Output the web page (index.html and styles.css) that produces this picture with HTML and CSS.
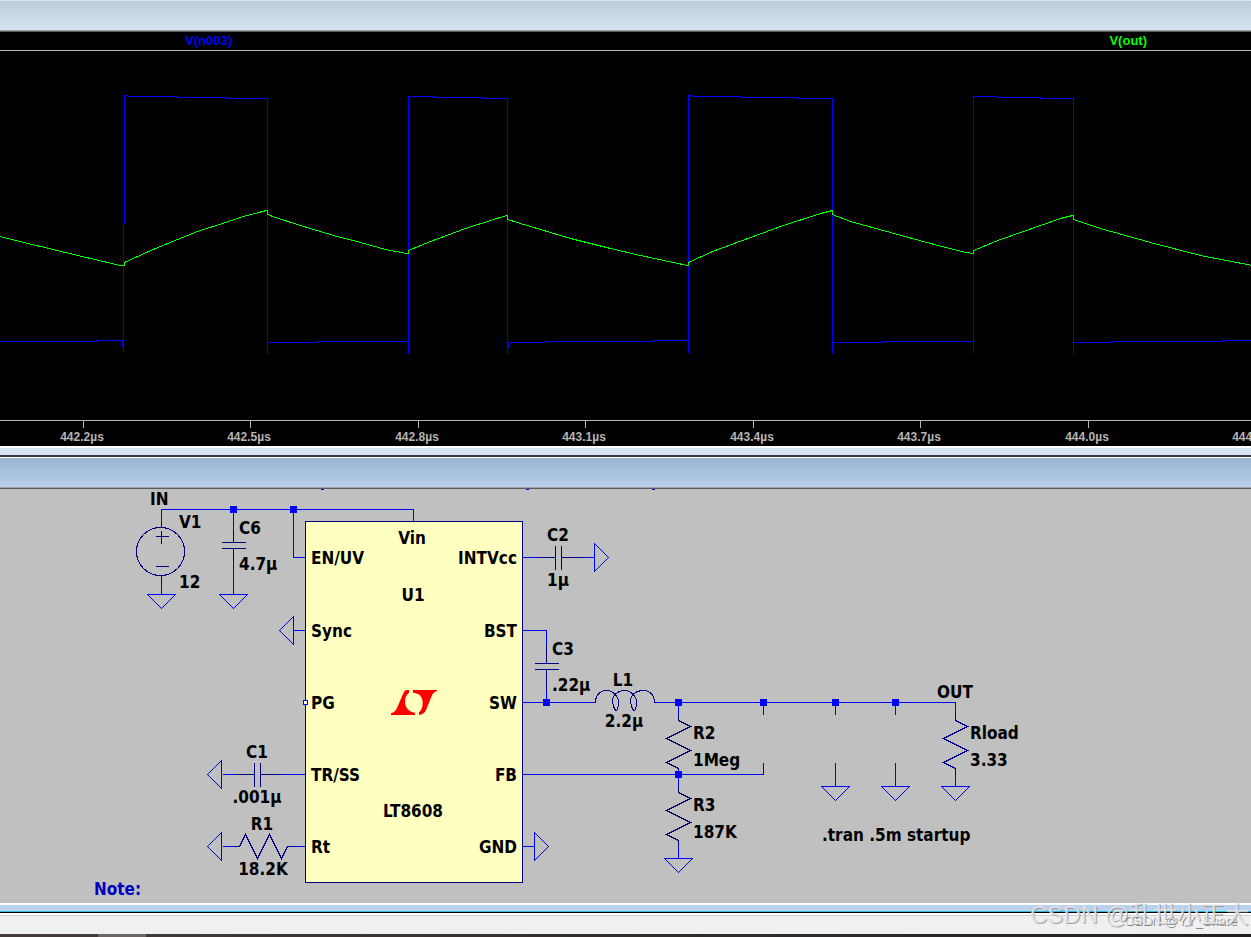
FILE: index.html
```html
<!DOCTYPE html>
<html lang="en">
<head>
<meta charset="utf-8">
<title>Waveform and schematic</title>
<link rel="stylesheet" href="styles.css">
</head>
<body>
<main class="app">
  <section class="pane">
    <header class="titlebar titlebar-inactive"></header>
    <div class="plot">
      <div class="legend">
        <span class="trace-sw">V(n003)</span>
        <span class="trace-out">V(out)</span>
      </div>
      <svg class="waves" role="img" aria-label="V(n003) and V(out) against time">
        <g transform="translate(0.5 -50.5)" fill="none">
          <path class="sw" d="M-1 341H96V340H123V352V223H124V95H127V96H177V97H226V98H267V353V342H317V341H408V353V96H434V97H482V98H507V353V342H545V341H653V340H688V352V95H692V96H740V97H798V98H832V353V342H882V341H973V352V96H997V97H1040V98H1073V353V342H1110V341H1222V340H1252M122 340V346M508 342V347"/>
          <path class="out" d="M-1 236L40 246L90 258L120 265H124V262L148 251L172 241L197 231L222 223L243 216L258 212L266 210H267V214L275 217L300 225L333 235L360 242L385 249L406 253H408V250L430 241L465 228L490 220L506 215H507V219L530 226L570 238L610 248L640 255L687 265H688V262L712 251L750 237L783 225L820 213L832 210V214L850 221L890 232L930 243L965 252L973 253V250L1000 239L1040 225L1060 218L1072 215H1073V219L1100 228L1150 242L1200 255L1252 265"/>
        </g>
      </svg>
      <svg class="axis" role="img" aria-label="Time axis">
        <path class="tick" d="M83.500 0V7M250.500 0V7M418.500 0V7M585.500 0V7M753.500 0V7M920.500 0V7M1088.500 0V7"/>
        <g text-anchor="middle">
          <text x="82" y="20">442.2µs</text>
          <text x="249" y="20">442.5µs</text>
          <text x="417" y="20">442.8µs</text>
          <text x="584" y="20">443.1µs</text>
          <text x="752" y="20">443.4µs</text>
          <text x="919" y="20">443.7µs</text>
          <text x="1087" y="20">444.0µs</text>
          <text x="1254" y="20">444.3µs</text>
        </g>
      </svg>
    </div>
    <div class="frame frame-inactive"></div>
  </section>

  <section class="pane pane-grow">
    <header class="titlebar titlebar-active"></header>
    <svg class="schematic" role="img" aria-label="LT8608 regulator schematic">
      <defs>
        <path id="gnd-down" d="M-14 0H14L0 14Z"/>
        <path id="gnd-left" d="M0 -14V14L-14 0Z"/>
        <path id="gnd-right" d="M0 -14V14L14 0Z"/>
        <path id="res" d="M0 -6V0L12 6L-12 18L12 30L-12 42L0 48V54"/>
        <rect id="node" x="-3.500" y="-3.500" width="7" height="7"/>
      </defs>
      <g transform="translate(0.5 -488.5)">
        <rect class="chip" x="305" y="521" width="217" height="361"/>
        <g class="wire">
          <path d="M161 527V509H413V521M233 509V542M293 509V557H305M161 575V594M233 548V594"/>
          <path d="M293 630H305M522 630H546V663M546 669V702M522 702H595M654 702H955V714"/>
          <path d="M522 557H555M561 557H594M222 774H254M260 774H305M222 846H239M287 846H305M522 846H534"/>
          <path d="M522 774H763V762M763 702V714M835 702V714M895 702V714M835 762V786M895 762V786M955 774V786M678 702V714M678 774V786M678 846V858"/>
          <path d="M320 489H323M525 489H528M651 489H654"/>
          <use href="#gnd-down" x="161" y="594"/>
          <use href="#gnd-down" x="233" y="594"/>
          <use href="#gnd-down" x="678" y="858"/>
          <use href="#gnd-down" x="835" y="786"/>
          <use href="#gnd-down" x="895" y="786"/>
          <use href="#gnd-down" x="955" y="786"/>
          <use href="#gnd-left" x="293" y="630"/>
          <use href="#gnd-left" x="221" y="774"/>
          <use href="#gnd-left" x="221" y="846"/>
          <use href="#gnd-right" x="594" y="557"/>
          <use href="#gnd-right" x="534" y="846"/>
        </g>
        <g class="part">
          <circle cx="160" cy="551" r="24"/>
          <path d="M155 536H168M161 530V543M155 566H168M161 521V527M161 575V581"/>
          <path d="M221 542H245M221 548H245M233 530V542M233 548V560"/>
          <path d="M555 545V569M561 545V569M537 557H555M561 557H582"/>
          <path d="M534 663H558M534 669H558M546 643V663M546 669V690"/>
          <path d="M254 762V786M260 762V786M234 774H254M260 774H281"/>
          <path d="M233 846H239L245 834L257 858L269 834L281 858L287 846H293"/>
          <path d="M595 702C595 695 599 690 606 690C613 690 619 697 618 704Q617 710 616 710C614 710 612 704 612 700C612 694 618 690 624 690C631 690 637 697 636 704Q635 710 634 710C632 710 630 704 630 700C630 694 636 690 643 690C650 690 654 695 654 702"/>
          <use href="#res" x="678" y="720"/>
          <use href="#res" x="678" y="792"/>
          <use href="#res" x="955" y="720"/>
        </g>
        <rect class="pin" x="303" y="700" width="4" height="4"/>
        <g class="nodes">
          <use href="#node" x="233" y="509"/>
          <use href="#node" x="293" y="509"/>
          <use href="#node" x="546" y="702"/>
          <use href="#node" x="678" y="702"/>
          <use href="#node" x="763" y="702"/>
          <use href="#node" x="835" y="702"/>
          <use href="#node" x="895" y="702"/>
          <use href="#node" x="678" y="774"/>
        </g>
      </g>
      <g transform="translate(0 -489)">
        <svg x="391" y="690" width="46" height="25" viewBox="363 270 138 75">
          <path class="logo" d="M417 270H408Q402 273 399 282L382 322Q376 337 363 340V345H435V338C417 336 405 324 405 304Q405 288 417 278ZM429 270H501V273Q489 277 485 288L469 328Q462 345 447 345V337Q458 328 458 309C459 291 448 279 429 278Z"/>
        </svg>
        <g class="label">
          <text x="150" y="505">IN</text>
          <text x="179" y="528">V1</text>
          <text x="179" y="588">12</text>
          <text x="239" y="534">C6</text>
          <text x="239" y="570">4.7µ</text>
          <text x="311" y="564">EN/UV</text>
          <text x="311" y="637">Sync</text>
          <text x="311" y="709">PG</text>
          <text x="311" y="781">TR/SS</text>
          <text x="311" y="853">Rt</text>
          <text x="552" y="655">C3</text>
          <text x="552" y="691">.22µ</text>
          <text x="693" y="739">R2</text>
          <text x="693" y="766">1Meg</text>
          <text x="693" y="811">R3</text>
          <text x="693" y="838">187K</text>
          <text x="937" y="698">OUT</text>
          <text x="970" y="739">Rload</text>
          <text x="970" y="766">3.33</text>
          <text x="822" y="841">.tran .5m startup</text>
          <text class="note" x="94" y="895">Note:</text>
        </g>
        <g class="label" text-anchor="end">
          <text x="517" y="564">INTVcc</text>
          <text x="517" y="637">BST</text>
          <text x="517" y="709">SW</text>
          <text x="517" y="781">FB</text>
          <text x="517" y="853">GND</text>
        </g>
        <g class="label" text-anchor="middle">
          <text x="412" y="544">Vin</text>
          <text x="413" y="601">U1</text>
          <text x="413" y="817">LT8608</text>
          <text x="558" y="541">C2</text>
          <text x="558" y="586">1µ</text>
          <text x="623" y="686">L1</text>
          <text x="624" y="727">2.2µ</text>
          <text x="257" y="758">C1</text>
          <text x="257" y="803">.001µ</text>
          <text x="262" y="830">R1</text>
          <text x="263" y="875">18.2K</text>
        </g>
      </g>
    </svg>
    <div class="frame frame-active"></div>
  </section>

  <footer class="statusbar"></footer>
  <div class="taskbar"><span class="taskbar-item"></span></div>
  <div class="mark mark-small">CSDN @YY_Share</div>
  <div class="mark mark-large">CSDN @乱世小正大</div>
</main>
</body>
</html>
```
FILE: styles.css
```css
* {
  box-sizing: border-box;
}

body {
  margin: 0;
  background: #f0f0f0;
  font-family: "Liberation Sans", sans-serif;
}

.app {
  position: relative;
  display: flex;
  flex-direction: column;
  min-height: 100vh;
  overflow: hidden;
}

.pane {
  display: flex;
  flex-direction: column;
}

.pane-grow {
  flex: 1;
}

.titlebar {
  height: 32px;
  border-bottom: 1px solid #5c5c5c;
  box-shadow: inset 0 -1px #a0a0a0;
}

.titlebar-inactive {
  border-top: 1px solid #e0e7ef;
  background: linear-gradient(#bfcddb, #d7e4f2);
}

.titlebar-active {
  border-top: 1px solid #ffffff;
  background: linear-gradient(#99b4d1, #b9d1ea);
}

.plot {
  background: #000000;
}

.legend {
  display: flex;
  justify-content: space-between;
  height: 19px;
  padding: 0 104px 0 185px;
  border-bottom: 1px solid #b4b4b4;
  font-size: 13px;
  font-weight: bold;
  line-height: 18px;
}

.trace-sw {
  color: #0000ff;
}

.trace-out {
  color: #00ff00;
}

.waves {
  display: block;
  width: 100%;
  height: 369px;
}

.sw,
.out {
  stroke-width: 1;
  shape-rendering: crispEdges;
}

.sw {
  stroke: #0000ff;
}

.out {
  stroke: #00ff00;
}

.axis {
  display: block;
  width: 100%;
  height: 26px;
  border-top: 1px solid #b4b4b4;
  fill: #b4b4b4;
  font-size: 12px;
  font-weight: bold;
}

.tick {
  stroke: #b4b4b4;
  shape-rendering: crispEdges;
}

.frame-inactive {
  height: 11px;
  border-top: 2px solid #ffffff;
  border-bottom: 2px solid #3c3640;
  background: #d7e4f2;
}

.schematic {
  display: block;
  flex: 1;
  width: 100%;
  min-height: 414px;
  background: #c0c0c0;
}

.wire,
.part,
.chip,
.pin {
  fill: none;
  stroke-width: 1;
  shape-rendering: crispEdges;
}

.wire {
  stroke: #0000ff;
}

.part {
  stroke: #000080;
}

.chip {
  fill: #ffffc0;
  stroke: #000080;
}

.pin {
  fill: #ffffff;
  stroke: #0000ff;
}

.nodes {
  fill: #0000ff;
}

.logo {
  fill: #ff0000;
}

.label {
  fill: #000000;
  font-family: "DejaVu Sans Condensed", "DejaVu Sans", sans-serif;
  font-size: 17px;
  font-weight: bold;
}

.note {
  fill: #0000c0;
}

.frame-active {
  height: 10px;
  border-top: 2px solid #ffffff;
  border-bottom: 1px solid #000000;
  background: #b9d1ea;
  box-shadow: inset 0 -1px #2bb8dc;
}

.statusbar {
  height: 21px;
  border-top: 2px solid #ffffff;
  background: #f0f0f0;
  box-shadow: inset 0 1px #d0d0d0;
}

.taskbar {
  display: flex;
  height: 3px;
  padding-left: 98px;
  background: linear-gradient(90deg, #453c3a, #231f20);
}

.taskbar-item {
  width: 48px;
  background: #6b6462;
}

.mark {
  position: absolute;
  white-space: nowrap;
}

.mark-small {
  right: 14px;
  bottom: 8px;
  color: #f0f0f0;
  font-size: 13px;
  line-height: 16px;
  text-shadow: 1px 1px #808080;
}

.mark-large {
  right: 2px;
  bottom: 6px;
  color: rgba(232, 232, 232, 0.85);
  font-family: "Liberation Sans", "Noto Sans CJK SC", sans-serif;
  font-size: 24px;
  line-height: 32px;
  text-shadow: 1px 1px rgba(120, 120, 120, 0.6);
}
```
